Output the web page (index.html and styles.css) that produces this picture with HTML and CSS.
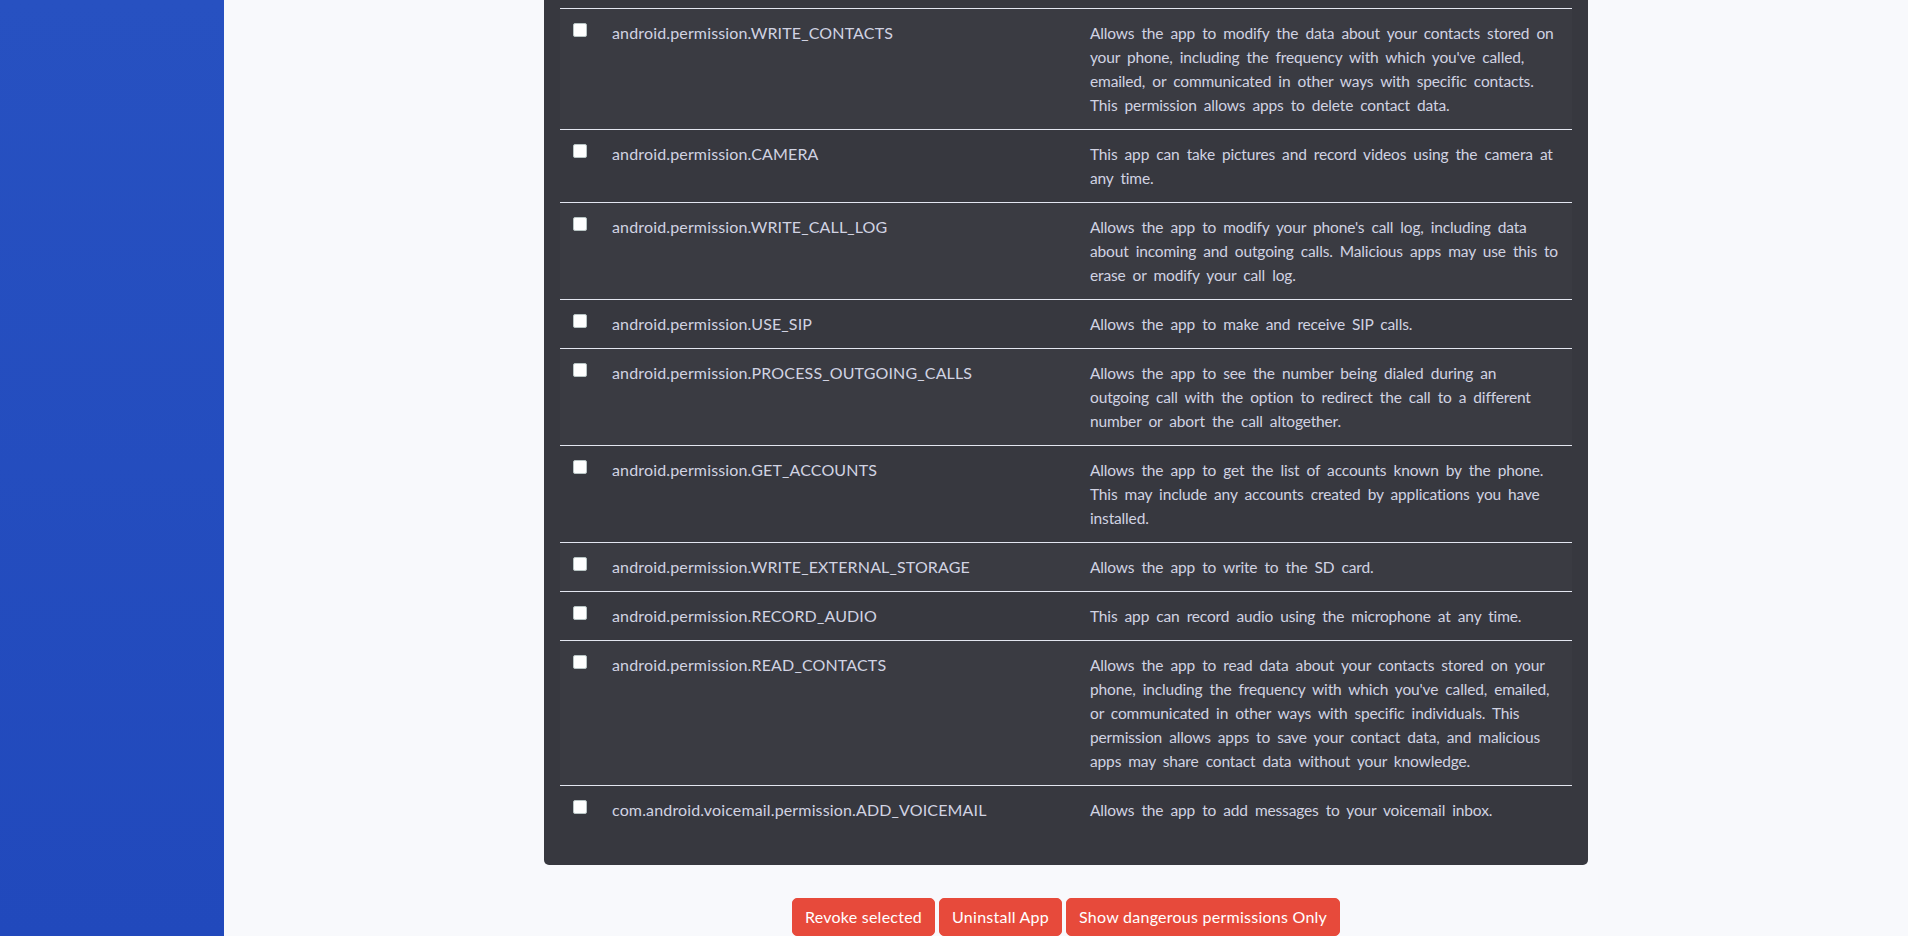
FILE: index.html
```html
<!DOCTYPE html>
<html lang="en">
<head>
<meta charset="utf-8">
<title>Permissions</title>
<link rel="stylesheet" href="styles.css">
</head>
<body>
<div class="layout">
  <aside class="sidebar"></aside>
  <main class="content">
    <div class="card">
      <table class="perm-table">
        <colgroup><col class="c-check"><col class="c-name"><col class="c-desc"></colgroup>
        <tbody>
          <tr><td><input type="checkbox" class="chk"></td><td class="name">android.permission.WRITE_CONTACTS</td><td class="desc">Allows the app to modify the data about your contacts stored on your phone, including the frequency with which you've called, emailed, or communicated in other ways with specific contacts. This permission allows apps to delete contact data.</td></tr>
          <tr><td><input type="checkbox" class="chk"></td><td class="name">android.permission.CAMERA</td><td class="desc">This app can take pictures and record videos using the camera at any time.</td></tr>
          <tr><td><input type="checkbox" class="chk"></td><td class="name">android.permission.WRITE_CALL_LOG</td><td class="desc">Allows the app to modify your phone's call log, including data about incoming and outgoing calls. Malicious apps may use this to erase or modify your call log.</td></tr>
          <tr><td><input type="checkbox" class="chk"></td><td class="name">android.permission.USE_SIP</td><td class="desc">Allows the app to make and receive SIP calls.</td></tr>
          <tr><td><input type="checkbox" class="chk"></td><td class="name">android.permission.PROCESS_OUTGOING_CALLS</td><td class="desc">Allows the app to see the number being dialed during an outgoing call with the option to redirect the call to a different number or abort the call altogether.</td></tr>
          <tr><td><input type="checkbox" class="chk"></td><td class="name">android.permission.GET_ACCOUNTS</td><td class="desc">Allows the app to get the list of accounts known by the phone. This may include any accounts created by applications you have installed.</td></tr>
          <tr><td><input type="checkbox" class="chk"></td><td class="name">android.permission.WRITE_EXTERNAL_STORAGE</td><td class="desc">Allows the app to write to the SD card.</td></tr>
          <tr><td><input type="checkbox" class="chk"></td><td class="name">android.permission.RECORD_AUDIO</td><td class="desc">This app can record audio using the microphone at any time.</td></tr>
          <tr><td><input type="checkbox" class="chk"></td><td class="name">android.permission.READ_CONTACTS</td><td class="desc">Allows the app to read data about your contacts stored on your phone, including the frequency with which you've called, emailed, or communicated in other ways with specific individuals. This permission allows apps to save your contact data, and malicious apps may share contact data without your knowledge.</td></tr>
          <tr><td><input type="checkbox" class="chk"></td><td class="name">com.android.voicemail.permission.ADD_VOICEMAIL</td><td class="desc">Allows the app to add messages to your voicemail inbox.</td></tr>
        </tbody>
      </table>
    </div>
    <div class="actions">
      <button class="btn">Revoke selected</button>
      <button class="btn">Uninstall App</button>
      <button class="btn">Show dangerous permissions Only</button>
    </div>
  </main>
</div>
</body>
</html>
```
FILE: styles.css
```css
html, body {
  margin: 0;
  padding: 0;
}
body {
  background: #f8f9fc;
  font-family: Lato, "Open Sans", sans-serif;
  font-size: 16px;
  line-height: 24px;
  color: #d1d3e2;
  overflow: hidden;
}
.layout {
  display: flex;
  min-height: 936px;
}
.sidebar {
  width: 224px;
  flex: 0 0 224px;
  background: linear-gradient(180deg, #2751c1 0%, #2149bc 100%);
}
.content {
  flex: 1;
  display: flex;
  flex-direction: column;
  align-items: center;
}
.card {
  width: 1044px;
  box-sizing: border-box;
  background: #37383f;
  border-radius: 0 0 5px 5px;
  padding: 8px 16px 31px;
}
.perm-table {
  width: 100%;
  table-layout: fixed;
  border-collapse: collapse;
}
.c-check { width: 40px; }
.c-name { width: 478px; }
.c-desc { width: 494px; }
.perm-table td {
  padding: 12px;
  vertical-align: top;
  border-top: 1px solid #e3e6f0;
}
.perm-table td.name {
  font-size: 16px;
  letter-spacing: 0.15px;
}
.perm-table td.desc {
  font-size: 15.5px;
  letter-spacing: -0.15px;
  word-spacing: 3.25px;
}
.perm-table tr:nth-child(odd) td {
  background: rgba(255, 255, 255, 0.02);
}
.chk {
  appearance: none;
  -webkit-appearance: none;
  display: block;
  width: 14px;
  height: 14px;
  margin: 2px 0 0 1px;
  background: #ffffff;
  border: 1px solid #b8c4c4;
  border-radius: 2px;
  box-sizing: border-box;
}
.actions {
  margin-top: 33px;
  display: flex;
  gap: 4px;
  justify-content: center;
}
.btn {
  font-family: Lato, "Open Sans", sans-serif;
  font-size: 16px;
  line-height: 24px;
  letter-spacing: 0.25px;
  color: #ffffff;
  background: #e74a3b;
  border: 1px solid #e74a3b;
  border-radius: 5px;
  padding: 6px 12px;
}
```
